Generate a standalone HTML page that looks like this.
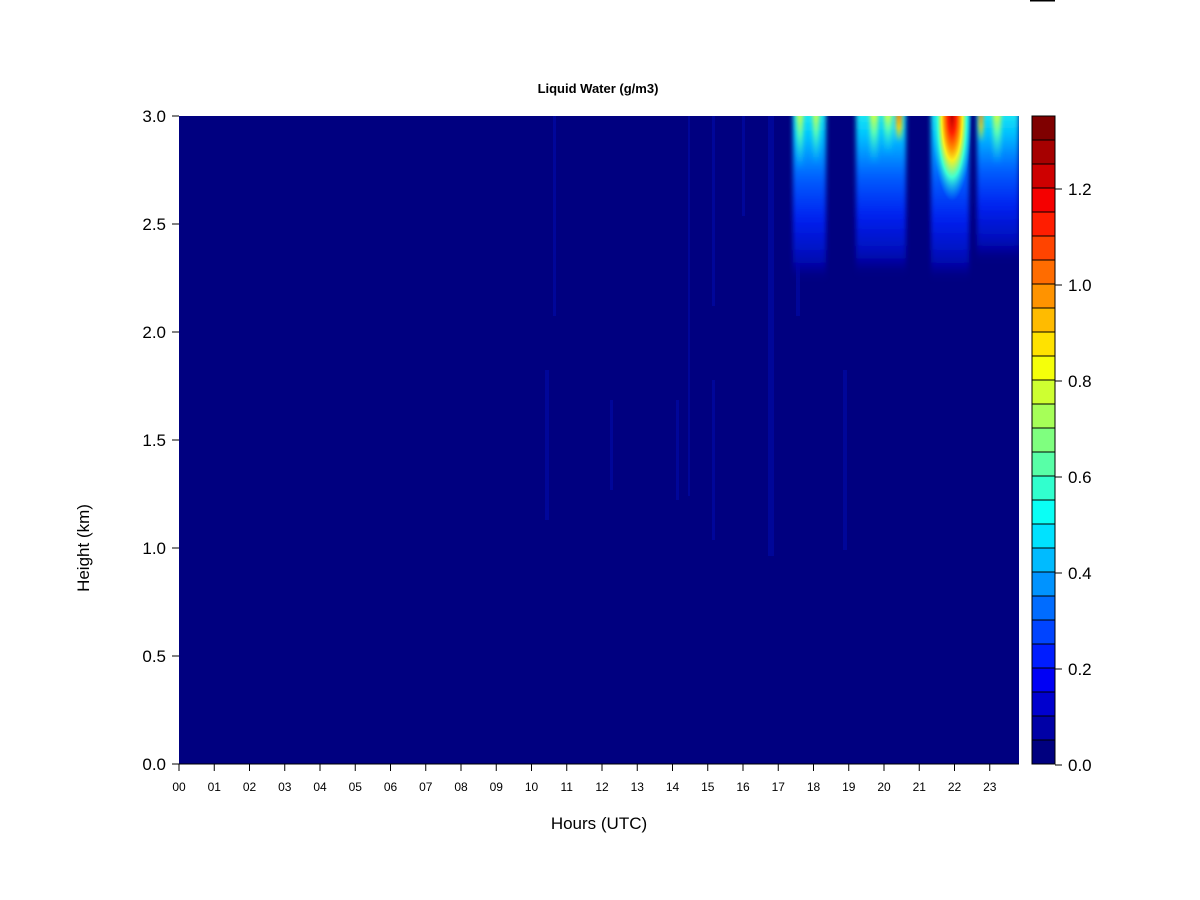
<!DOCTYPE html>
<html><head><meta charset="utf-8"><style>html,body{margin:0;padding:0;background:#fff}svg{display:block}</style></head><body>
<svg width="1200" height="900" xmlns="http://www.w3.org/2000/svg" font-family="Liberation Sans, Arial, sans-serif">
<defs>
<filter id="b" x="-50%" y="-50%" width="200%" height="200%"><feGaussianBlur stdDeviation="2.5 6"/></filter>
<filter id="b2" x="-50%" y="-50%" width="200%" height="200%"><feGaussianBlur stdDeviation="2"/></filter>
<linearGradient id="g1" x1="0" y1="0" x2="0" y2="1">
<stop offset="0" stop-color="#30ffe8"/><stop offset="0.2" stop-color="#00c8ff"/><stop offset="0.45" stop-color="#0060ff"/><stop offset="0.7" stop-color="#0020f0"/><stop offset="0.9" stop-color="#0010c0"/><stop offset="1" stop-color="#0000a0"/></linearGradient>
<linearGradient id="g2" x1="0" y1="0" x2="0" y2="1">
<stop offset="0" stop-color="#f0ff20"/><stop offset="0.4" stop-color="#60ffb0"/><stop offset="1" stop-color="#00d0ff" stop-opacity="0"/></linearGradient>
<linearGradient id="g3" x1="0" y1="0" x2="0" y2="1">
<stop offset="0" stop-color="#ff7000"/><stop offset="0.5" stop-color="#ffd000"/><stop offset="1" stop-color="#ffff00" stop-opacity="0"/></linearGradient>
<radialGradient id="hot" cx="0.5" cy="0.5" r="0.5">
<stop offset="0" stop-color="#c00000"/><stop offset="0.2" stop-color="#ff2000"/><stop offset="0.38" stop-color="#ff9000"/><stop offset="0.52" stop-color="#f8f020"/><stop offset="0.72" stop-color="#40ffd0"/><stop offset="1" stop-color="#00c0ff" stop-opacity="0"/></radialGradient>
<clipPath id="pc"><rect x="179" y="116" width="840" height="648"/></clipPath>
</defs>
<rect x="1030" y="0" width="25" height="1.5" fill="#000"/>
<text x="598" y="93" font-size="13" font-weight="bold" text-anchor="middle">Liquid Water (g/m3)</text>
<rect x="179" y="116" width="840" height="648" fill="#000080"/>
<g clip-path="url(#pc)">
<g opacity="0.4" fill="#0010c0">
<rect x="553" y="116" width="3" height="200"/><rect x="545" y="370" width="4" height="150"/><rect x="610" y="400" width="3" height="90"/>
<rect x="676" y="400" width="3" height="100"/><rect x="688" y="116" width="2" height="380"/><rect x="712" y="116" width="3" height="190"/><rect x="712" y="380" width="3" height="160"/>
<rect x="742" y="116" width="3" height="100"/><rect x="768" y="116" width="6" height="440"/><rect x="843" y="370" width="4" height="180"/><rect x="796" y="116" width="4" height="200"/>
</g>
<g filter="url(#b)">
<rect x="793" y="100" width="33" height="170" fill="url(#g1)"/>
<rect x="856" y="100" width="50" height="165" fill="url(#g1)"/>
<rect x="931" y="100" width="38" height="170" fill="url(#g1)"/>
<rect x="977" y="100" width="42" height="152" fill="url(#g1)"/>
</g>
<g filter="url(#b2)">
<rect x="797" y="110" width="6" height="60" fill="url(#g2)"/>
<rect x="813" y="110" width="6" height="55" fill="url(#g2)"/>
<rect x="870" y="110" width="8" height="55" fill="url(#g2)"/>
<rect x="884" y="110" width="8" height="45" fill="url(#g2)"/>
<rect x="993" y="110" width="8" height="55" fill="url(#g2)"/>
<rect x="896" y="112" width="6" height="30" fill="url(#g3)"/>
<rect x="979" y="112" width="4" height="30" fill="url(#g3)"/>
</g>
<ellipse cx="952" cy="116" rx="20" ry="85" fill="url(#hot)"/>
</g>
<g stroke="#000" stroke-width="1">
<line x1="172" y1="116" x2="179" y2="116"/><line x1="172" y1="224" x2="179" y2="224"/><line x1="172" y1="332" x2="179" y2="332"/><line x1="172" y1="440" x2="179" y2="440"/><line x1="172" y1="548" x2="179" y2="548"/><line x1="172" y1="656" x2="179" y2="656"/><line x1="172" y1="764" x2="179" y2="764"/>
<line x1="179" y1="764" x2="1019" y2="764"/>
</g>
<g font-size="17" text-anchor="end">
<text x="166" y="122">3.0</text><text x="166" y="230">2.5</text><text x="166" y="338">2.0</text><text x="166" y="446">1.5</text><text x="166" y="554">1.0</text><text x="166" y="662">0.5</text><text x="166" y="770">0.0</text>
</g>
<g id="xt" font-size="12" text-anchor="middle"></g>
<text x="599" y="829" font-size="17" text-anchor="middle">Hours (UTC)</text>
<text transform="translate(89,548) rotate(-90)" font-size="17" text-anchor="middle">Height (km)</text>
<g id="cb"></g>
<g stroke="#000" stroke-width="1">
<line x1="1055" y1="189" x2="1062" y2="189"/><line x1="1055" y1="285" x2="1062" y2="285"/><line x1="1055" y1="381" x2="1062" y2="381"/><line x1="1055" y1="477" x2="1062" y2="477"/><line x1="1055" y1="573" x2="1062" y2="573"/><line x1="1055" y1="669" x2="1062" y2="669"/><line x1="1055" y1="765" x2="1062" y2="765"/>
</g>
<g font-size="17">
<text x="1068" y="195">1.2</text><text x="1068" y="291">1.0</text><text x="1068" y="387">0.8</text><text x="1068" y="483">0.6</text><text x="1068" y="579">0.4</text><text x="1068" y="675">0.2</text><text x="1068" y="771">0.0</text>
</g>
</svg>
<script>
var ns="http://www.w3.org/2000/svg",xt=document.getElementById('xt');
for(var h=0;h<24;h++){var x=179+h*35.25;
var l=document.createElementNS(ns,'line');l.setAttribute('x1',x);l.setAttribute('x2',x);l.setAttribute('y1',764);l.setAttribute('y2',771);l.setAttribute('stroke','#000');xt.appendChild(l);
var t=document.createElementNS(ns,'text');t.setAttribute('x',x);t.setAttribute('y',791);t.textContent=(h<10?'0':'')+h;xt.appendChild(t);}
var c=["#00007F","#0000A6","#0000CE","#0000F5","#001DFF","#0044FF","#006CFF","#0093FF","#00BBFF","#00E2FF","#0AFFF5","#31FFCE","#58FFA7","#7FFF7F","#A6FF58","#CEFF31","#F5FF0A","#FFE200","#FFBB00","#FF9300","#FF6C00","#FF4400","#FF1D00","#F50000","#CE0000","#A60000","#7F0000"];
var cb=document.getElementById('cb');
for(var i=0;i<27;i++){var r=document.createElementNS(ns,'rect');r.setAttribute('x',1032);r.setAttribute('y',764-(i+1)*24);r.setAttribute('width',23);r.setAttribute('height',24);r.setAttribute('fill',c[i]);r.setAttribute('stroke','#000');r.setAttribute('stroke-width','1');cb.appendChild(r);}
</script>
</body></html>
